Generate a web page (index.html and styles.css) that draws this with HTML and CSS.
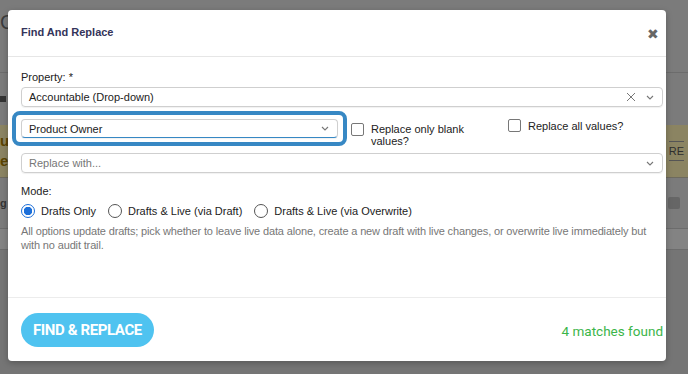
FILE: index.html
```html
<!DOCTYPE html>
<html lang="en">
<head>
    <meta charset="UTF-8">
    <meta name="viewport" content="width=device-width, initial-scale=1.0">
    <title>Find And Replace</title>
    <link rel="stylesheet" href="styles.css">
</head>
<body>
    <div class="backdrop">
        <div class="bg-row bg-top"><span class="bg-big">C</span></div>
        <div class="bg-row bg-line"></div>
        <div class="bg-row bg-dot"><span class="bg-sq"></span></div>
        <div class="bg-row bg-band">
            <span class="bg-brown">u<br>e</span>
            <span class="bg-re">RE</span>
        </div>
        <div class="bg-row bg-mid"><span class="bg-g">g</span><span class="bg-box"></span></div>
        <div class="bg-row bg-light"></div>
        <div class="bg-row bg-rest"></div>
    </div>

    <div class="modal">
        <div class="modal-header">
            <h2>Find And Replace</h2>
            <span class="close">&#x2716;</span>
        </div>

        <div class="modal-body">
            <label class="field-label">Property: *</label>
            <div class="select">
                <span>Accountable (Drop-down)</span>
                <span class="select-icons">
                    <svg width="10" height="10" viewBox="0 0 10 10"><path d="M1 1 L9 9 M9 1 L1 9" stroke="#777" stroke-width="1" fill="none"/></svg>
                    <svg class="chev" width="8" height="5" viewBox="0 0 8 5"><path d="M1 1 L4 4 L7 1" stroke="#777" stroke-width="1.1" fill="none"/></svg>
                </span>
            </div>

            <div class="match-row">
                <div class="highlight">
                    <div class="select focused">
                        <span>Product Owner</span>
                        <svg class="chev" width="8" height="5" viewBox="0 0 8 5"><path d="M1 1 L4 4 L7 1" stroke="#777" stroke-width="1.1" fill="none"/></svg>
                    </div>
                </div>
                <label class="check check-blank">
                    <span class="box"></span>
                    <span class="check-text">Replace only blank values?</span>
                </label>
                <label class="check check-all">
                    <span class="box"></span>
                    <span>Replace all values?</span>
                </label>
            </div>

            <div class="select placeholder">
                <span>Replace with...</span>
                <svg class="chev" width="8" height="5" viewBox="0 0 8 5"><path d="M1 1 L4 4 L7 1" stroke="#777" stroke-width="1.1" fill="none"/></svg>
            </div>

            <div class="field-label mode-label">Mode:</div>
            <div class="radios">
                <label class="radio"><span class="circle checked"></span>Drafts Only</label>
                <label class="radio"><span class="circle"></span>Drafts &amp; Live (via Draft)</label>
                <label class="radio"><span class="circle"></span>Drafts &amp; Live (via Overwrite)</label>
            </div>
            <p class="hint">All options update drafts; pick whether to leave live data alone, create a new draft with live changes, or overwrite live immediately but with no audit trail.</p>
        </div>

        <div class="modal-footer">
            <button class="find-button">FIND &amp; REPLACE</button>
            <span class="matches">4 matches found</span>
        </div>
    </div>
</body>
</html>
```

FILE: styles.css
```css
body {
    margin: 0;
    width: 688px;
    height: 374px;
    overflow: hidden;
    font-family: "Liberation Sans", Arial, sans-serif;
    background: #727272;
    position: relative;
}

/* page behind the dialog, dimmed */
.backdrop {
    display: flex;
    flex-direction: column;
    height: 374px;
}
.bg-row {
    display: flex;
    justify-content: space-between;
    align-items: center;
}
.bg-top {
    height: 72px;
    background: #7b7b7b;
    align-items: flex-start;
}
.bg-big {
    font-size: 20px;
    color: #3c3c3c;
    margin: 11px 0 0 0;
}
.bg-line {
    height: 1px;
    background: #6c6c6c;
}
.bg-dot {
    height: 52px;
    background: #7b7b7b;
}
.bg-sq {
    width: 6px;
    height: 6px;
    background: #333;
}
.bg-band {
    height: 52px;
    background: #8b8462;
    border-bottom: 1px solid #6d6a5e;
}
.bg-brown {
    color: #5a4300;
    font-size: 15px;
    line-height: 20px;
    font-weight: bold;
    margin-left: 0;
}
.bg-re {
    color: #2e2e2e;
    font-size: 11px;
    margin-right: 4px;
    border-top: 1px solid #555;
    border-bottom: 1px solid #555;
    padding: 3px 0;
}
.bg-mid {
    height: 50px;
    background: #7b7b7b;
    border-bottom: 1px solid #6c6c6c;
}
.bg-g {
    font-size: 11px;
    font-weight: bold;
    color: #333;
}
.bg-box {
    width: 12px;
    height: 12px;
    background: #666;
    border-radius: 2px;
    margin-right: 8px;
}
.bg-light {
    height: 20px;
    background: #838383;
    border-bottom: 1px solid #6c6c6c;
}
.bg-rest {
    flex: 1;
    background: #757575;
}

/* dialog */
.modal {
    position: absolute;
    left: 8px;
    top: 10px;
    width: 658px;
    height: 351px;
    background: #fff;
    border-radius: 4px;
    box-shadow: 0 2px 6px rgba(0, 0, 0, 0.25);
    display: flex;
    flex-direction: column;
}
.modal-header {
    height: 46px;
    border-bottom: 1px solid #e6e6e6;
    display: flex;
    justify-content: space-between;
    align-items: center;
    padding: 0 7px 0 13px;
}
.modal-header h2 {
    margin: 0 0 3px;
    font-size: 11px;
    font-weight: bold;
    color: #34345a;
}
.close {
    font-size: 14px;
    color: #666;
    margin-top: 2px;
}

.modal-body {
    flex: 1;
    padding: 13px 3px 0 13px;
    font-size: 11px;
    color: #222;
}
.field-label {
    display: block;
    line-height: 14px;
    margin-bottom: 3px;
}

.select {
    height: 18px;
    border: 1px solid #cfcfcf;
    border-radius: 4px;
    display: flex;
    align-items: center;
    justify-content: space-between;
    padding: 0 8px 0 7px;
    box-shadow: 0 1px 1px rgba(0, 0, 0, 0.06);
}
.select-icons {
    display: flex;
    align-items: center;
    gap: 8px;
}
.chev {
    margin-left: 2px;
}
.placeholder {
    color: #777;
    margin-top: 6px;
}

.match-row {
    display: flex;
    align-items: flex-start;
    margin-top: 4px;
    height: 36px;
}
.highlight {
    width: 317px;
    border: 4px solid #3788c4;
    border-radius: 8px;
    padding: 4px 5px;
    margin-left: -9px;
}
.focused {
    height: 17px;
    border-bottom: 1px solid #3788c4;
}
.check {
    display: flex;
    align-items: flex-start;
    gap: 7px;
    line-height: 12px;
}
.box {
    width: 11px;
    height: 11px;
    border: 1px solid #777;
    border-radius: 2px;
    background: #fff;
    flex-shrink: 0;
}
.check-blank {
    width: 157px;
    margin: 11px 0 0 4px;
}
.check-blank .check-text {
    width: 110px;
    margin-top: 1px;
}
.check-blank .box {
    margin-top: 1px;
}
.check-all {
    margin-top: 8px;
}
.check-all span:last-child {
    margin-top: 1px;
}

.mode-label {
    margin-top: 11px;
}
.radios {
    display: flex;
    gap: 12px;
    margin-top: 5px;
    line-height: 16px;
}
.radio {
    display: flex;
    align-items: center;
    gap: 6px;
}
.circle {
    width: 12px;
    height: 12px;
    border: 1px solid #555;
    border-radius: 50%;
    box-sizing: content-box;
    flex-shrink: 0;
}
.circle.checked {
    border-color: #1c6fd9;
    background: radial-gradient(circle, #1c6fd9 0 4px, #fff 4.5px);
}
.hint {
    margin: 5px 0 0;
    line-height: 14px;
    color: #777;
    letter-spacing: -0.15px;
}

.modal-footer {
    height: 63px;
    border-top: 1px solid #ececec;
    display: flex;
    align-items: center;
    justify-content: space-between;
    padding: 0 3px 0 13px;
}
.find-button {
    height: 34px;
    padding: 0 12px;
    border: none;
    border-radius: 17px;
    background: #4fc3f0;
    color: #fff;
    font-family: Roboto, sans-serif;
    font-weight: bold;
    font-size: 15px;
    letter-spacing: -0.4px;
    margin-top: 1px;
}
.matches {
    font-family: Roboto, sans-serif;
    font-size: 13.5px;
    color: #3bb54a;
    margin-top: 2px;
}
```
